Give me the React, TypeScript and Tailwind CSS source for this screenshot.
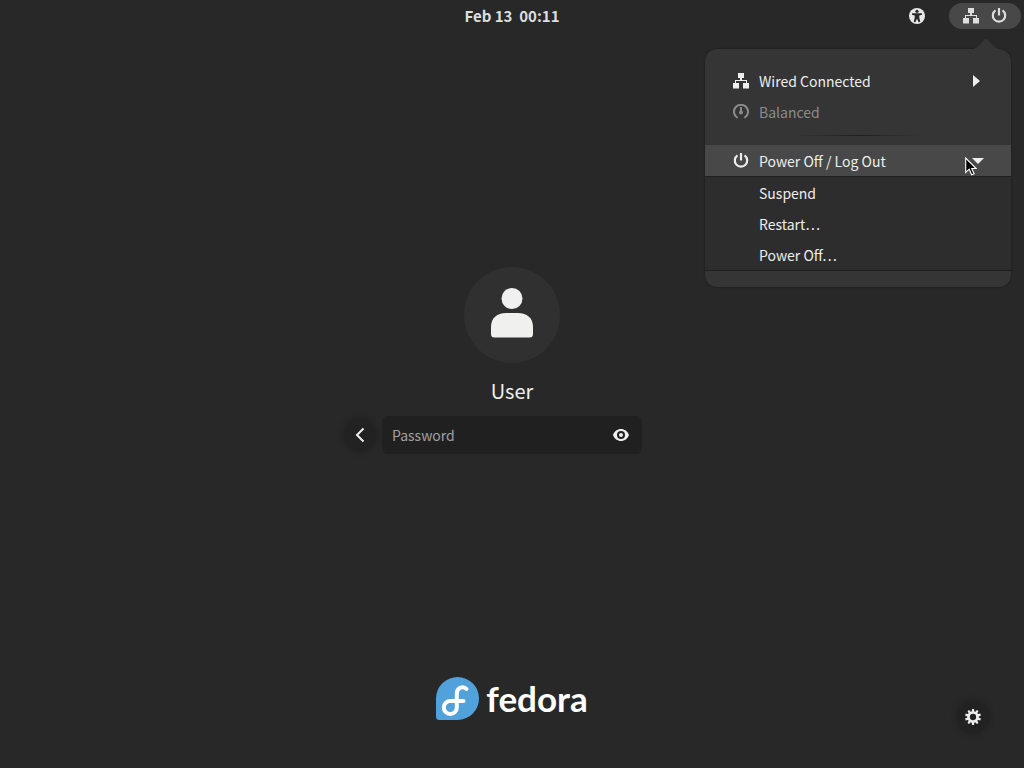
import React from "react";

type IconProps = { className?: string };

function NetworkIcon({ className }: IconProps) {
  return (
    <svg viewBox="0 0 16 16" className={className} fill="currentColor" aria-hidden="true">
      <path d="M5 0h6v5H9v2h5v3h2v5.500h-6V10h3V8H3v2h3v5.500H0V10h2V7h5V5H5z" />
    </svg>
  );
}

function PowerIcon({ className }: IconProps) {
  return (
    <svg viewBox="0 0 16 16" className={className} fill="none" stroke="currentColor" strokeWidth="2.200" aria-hidden="true">
      <path d="M8 0v7.500" />
      <path d="M4.500 2.400a6.200 6.200 0 1 0 7 0" />
    </svg>
  );
}

function AccessibilityIcon({ className }: IconProps) {
  return (
    <svg viewBox="0 0 16 16" className={className} aria-hidden="true">
      <circle cx="8" cy="8" r="8" fill="#e8e8e8" />
      <g fill="#282828">
        <circle cx="8" cy="3.300" r="1.600" />
        <path d="M3 5.200h10v1.600l-2.700.7v2.300l1 4-1.600.5L8.300 11.200h-.6l-1.400 3.100-1.600-.5 1-4V7.500L3 6.800z" />
      </g>
    </svg>
  );
}

function GaugeIcon({ className }: IconProps) {
  return (
    <svg viewBox="0 0 16 16" className={className} fill="none" stroke="currentColor" strokeWidth="2" aria-hidden="true">
      <path d="M4.500 13.800A7 7 0 1 1 11.500 13.800" />
      <path d="M8 3v6" />
      <circle cx="8" cy="8.500" r="2" fill="currentColor" stroke="none" />
    </svg>
  );
}

function PersonIcon({ className }: IconProps) {
  return (
    <svg viewBox="0 0 42 50" className={className} fill="#f0f0ef" aria-hidden="true">
      <circle cx="21" cy="10.500" r="10.500" />
      <path d="M0 39C0 30 6 25 15 25h12c9 0 15 5 15 14v7q0 3.500-3.500 3.500h-35Q0 49.500 0 46z" />
    </svg>
  );
}

function EyeIcon({ className }: IconProps) {
  return (
    <svg viewBox="0 0 16 16" className={className} aria-hidden="true">
      <path fill="currentColor" fillRule="evenodd" d="M8 2C4.500 2 1.200 4.300 0 8c1.200 3.700 4.500 6 8 6s6.800-2.300 8-6c-1.200-3.700-4.500-6-8-6zm0 2a4 4 0 1 1 0 8 4 4 0 0 1 0-8z" />
      <circle cx="8" cy="8" r="2" fill="currentColor" />
    </svg>
  );
}

function GearIcon({ className }: IconProps) {
  const angles = [0, 36, 72, 108, 144, 180, 216, 252, 288, 324];
  return (
    <svg viewBox="0 0 16 16" className={className} aria-hidden="true">
      <circle cx="8" cy="8" r="4.500" fill="none" stroke="currentColor" strokeWidth="2.700" />
      {angles.map((a) => (
        <path key={a} d="M7 0h2l.3 3H6.700z" fill="currentColor" transform={`rotate(${a} 8 8)`} />
      ))}
    </svg>
  );
}

function FedoraMark({ className }: IconProps) {
  return (
    <svg viewBox="0 0 43 43" className={className} fill="none" aria-hidden="true">
      <path d="M21.500 0A21.500 21.500 0 1 1 21.500 43H3.500A3.500 3.500 0 0 1 0 39.500V21.500A21.500 21.500 0 0 1 21.500 0z" fill="#51a2da" />
      <path d="M30.500 12C27.500 8.500 20.800 10.500 20.800 16.500V30.500a6.500 6.500 0 1 1-6.500-6.500H27.500" stroke="#fff" strokeWidth="4" strokeLinecap="round" strokeLinejoin="round" />
    </svg>
  );
}

function Cursor({ className }: IconProps) {
  return (
    <svg viewBox="0 0 12 19" className={className} aria-hidden="true">
      <path d="M.7 1v14.500l3.500-3.300 2.400 5.600 2.500-1.100-2.400-5.200h4.500z" fill="#000" stroke="#fff" strokeWidth="1.100" />
    </svg>
  );
}

const rowClass = "flex h-[31px] w-full items-center gap-[10px] pl-7 pr-[27px] text-left";

function SystemMenu() {
  return (
    <nav
      aria-label="System"
      className="absolute right-[13px] top-[49px] w-[306px] rounded-xl bg-[#353535] pb-4 pt-4 shadow-[0_0_2px_rgba(0,0,0,0.5)]"
    >
      <svg viewBox="0 0 24 10" className="absolute -top-[10px] right-[13px] h-[10px] w-6" fill="#353535" aria-hidden="true">
        <path d="M0 10Q3 9 10 1q2-2 4 0 7 8 10 9z" />
      </svg>
      <button className={rowClass}>
        <NetworkIcon className="size-4" />
        <span className="grow">Wired Connected</span>
        <svg viewBox="0 0 7 12" className="mr-1 h-3 w-[7px]" fill="currentColor" aria-hidden="true">
          <path d="M0 0l7 6-7 6z" />
        </svg>
      </button>
      <button className={`${rowClass} text-[#8b8b8b]`}>
        <GaugeIcon className="size-4" />
        <span>Balanced</span>
      </button>
      <div className="flex h-[18px] justify-center pt-2">
        <div className="h-px w-32 bg-gradient-to-r from-transparent via-[#202020] to-transparent" />
      </div>
      <button className={`${rowClass} bg-[#484848]`} aria-expanded="true">
        <PowerIcon className="size-4" />
        <span className="grow">Power Off / Log Out</span>
        <svg viewBox="0 0 12 6" className="h-[6px] w-3" fill="currentColor" aria-hidden="true">
          <path d="M0 0h12L6 6z" />
        </svg>
      </button>
      <div className="border-y border-[#1f1f1f] bg-[#2d2d2d]">
        {["Suspend", "Restart…", "Power Off…"].map((label) => (
          <button key={label} className="flex h-[31px] w-full items-center pl-[54px] text-left">
            {label}
          </button>
        ))}
      </div>
      <Cursor className="absolute left-[260px] top-[108px] h-[19px] w-3" />
    </nav>
  );
}

export default function App() {
  return (
    <div className="relative flex min-h-screen flex-col bg-[#282828] font-['Noto_Sans_CJK_SC','Noto_Sans',sans-serif] text-[14px] leading-5 text-[#eeeeee]">
      <header className="grid h-8 grid-cols-[1fr_auto_1fr] items-center px-[3px]">
        <span />
        <time className="whitespace-pre text-[15px] font-bold text-[#dedede]">{"Feb 13  00:11"}</time>
        <div className="flex items-center justify-end gap-6 text-[#dedede]">
          <button aria-label="Accessibility">
            <AccessibilityIcon className="size-4" />
          </button>
          <button aria-label="System menu" className="flex h-[26px] items-center gap-3 rounded-full bg-[#484848] px-[14px]">
            <NetworkIcon className="size-4" />
            <PowerIcon className="size-4" />
          </button>
        </div>
      </header>

      <main className="flex grow flex-col items-center justify-center pt-3">
        <div className="flex size-24 items-center justify-center rounded-full bg-[#303030] pb-1">
          <PersonIcon className="h-[50px] w-[42px]" />
        </div>
        <h1 className="mt-3 text-xl leading-8">User</h1>
        <form className="mt-[9px] flex items-center gap-[6px]" onSubmit={(e) => e.preventDefault()}>
          <button type="button" aria-label="Back" className="flex size-8 items-center justify-center rounded-full bg-[#222222] shadow-[0_0_4px_2px_#232323]">
            <svg viewBox="0 0 10 16" className="h-4 w-[10px]" fill="none" stroke="currentColor" strokeWidth="2" aria-hidden="true">
              <path d="M8.500 1.500L2 8l6.500 6.500" />
            </svg>
          </button>
          <div className="flex h-[38px] w-[260px] items-center rounded-md bg-[#202020] pl-[10px] pr-[13px]">
            <input
              type="password"
              aria-label="Password"
              placeholder="Password"
              className="min-w-0 grow bg-transparent outline-none placeholder:text-[#a0a0a0]"
            />
            <button type="button" aria-label="Show password">
              <EyeIcon className="size-4" />
            </button>
          </div>
          <span className="w-8" />
        </form>
      </main>

      <footer className="grid grid-cols-[1fr_auto_1fr] items-start px-[35px] pb-[35px]">
        <span />
        <div className="flex items-center gap-[7px]">
          <FedoraMark className="size-[43px]" />
          <span className="font-['Lato',sans-serif] text-[35px] font-bold leading-[43px] text-white">fedora</span>
        </div>
        <button aria-label="Session settings" className="mt-6 flex size-8 items-center justify-center justify-self-end rounded-full bg-[#222222] shadow-[0_0_4px_2px_#232323]">
          <GearIcon className="size-4" />
        </button>
      </footer>
      <SystemMenu />
    </div>
  );
}
